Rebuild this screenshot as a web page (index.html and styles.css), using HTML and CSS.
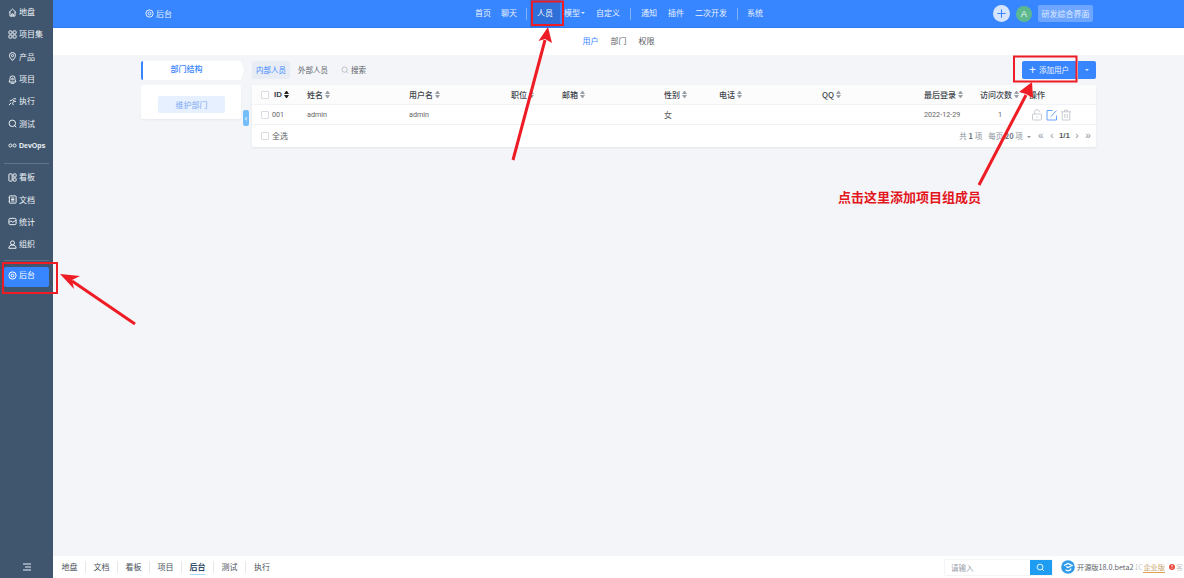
FILE: index.html
```html
<!DOCTYPE html>
<html lang="zh">
<head>
<meta charset="utf-8">
<title>后台 - 用户</title>
<link rel="stylesheet" href="styles.css">
</head>
<body>
<div class="app">
  <aside class="side">
    <nav class="side-list">
      <a class="side-item"><svg class="ico" viewBox="0 0 10 10"><path d="M1 5 5 1.200 9 5M2.200 4.200V9h5.600V4.200M4.200 9V6.500h1.600V9"/></svg>地盘</a>
      <a class="side-item"><svg class="ico" viewBox="0 0 10 10"><rect x="1" y="1" width="3.400" height="3.400" rx=".8"/><rect x="5.600" y="1" width="3.400" height="3.400" rx=".8"/><rect x="1" y="5.600" width="3.400" height="3.400" rx=".8"/><rect x="5.600" y="5.600" width="3.400" height="3.400" rx=".8"/></svg>项目集</a>
      <a class="side-item"><svg class="ico" viewBox="0 0 10 10"><path d="M5 9.500C3 7 1.600 5.600 1.600 4a3.400 3.400 0 0 1 6.800 0C8.400 5.600 7 7 5 9.500Z"/><circle cx="5" cy="4" r="1.200"/></svg>产品</a>
      <a class="side-item"><svg class="ico" viewBox="0 0 10 10"><path d="M5 1a2.800 2.800 0 0 0-2.800 2.800v1.500L1.200 7.800h7.600L7.800 5.300V3.800A2.800 2.800 0 0 0 5 1Z"/><circle cx="5" cy="4.500" r="1"/><path d="M3 9.200h4"/></svg>项目</a>
      <a class="side-item"><svg class="ico" viewBox="0 0 10 10"><path d="M1 9 3.500 6.500M2 4.500 5 3l2 1.500-2 2.500 1 2M6 2h3M7 4.500l2 .5"/></svg>执行</a>
      <a class="side-item"><svg class="ico" viewBox="0 0 10 10"><circle cx="4.800" cy="4.800" r="3.600"/><path d="m7 7 2.200 2.200"/></svg>测试</a>
      <a class="side-item side-strong"><svg class="ico" viewBox="0 0 10 10"><circle cx="2.700" cy="5" r="1.700"/><circle cx="7.300" cy="5" r="1.700"/></svg>DevOps</a>
      <span class="side-rule side-rule-a"></span>
      <a class="side-item"><svg class="ico" viewBox="0 0 10 10"><rect x="1" y="1" width="3.600" height="8" rx=".6"/><rect x="5.800" y="1" width="3.200" height="3.400" rx=".6"/><rect x="5.800" y="5.600" width="3.200" height="3.400" rx=".6"/></svg>看板</a>
      <a class="side-item"><svg class="ico" viewBox="0 0 10 10"><rect x="1.500" y="1" width="7.500" height="8" rx=".6"/><path d="M3.500 3.400h3.500M3.500 5h3.500M3.500 6.600h3.500M.8 3h1.400M.8 7h1.400"/></svg>文档</a>
      <a class="side-item"><svg class="ico" viewBox="0 0 10 10"><rect x="1" y="1.500" width="8" height="7" rx="1.500"/><path d="M1.200 6 3.200 4.300 5.200 5.800 8.800 3.800"/></svg>统计</a>
      <a class="side-item"><svg class="ico" viewBox="0 0 10 10"><circle cx="5" cy="3.200" r="2.200"/><path d="M1 9.200c0-2.500 1.500-3.600 4-3.600s4 1.100 4 3.600Z"/></svg>组织</a>
      <span class="side-rule side-rule-b"></span>
      <a class="side-item side-active"><svg class="ico" viewBox="0 0 10 10"><circle cx="5" cy="5" r="4"/><circle cx="5" cy="5" r="1.600"/></svg>后台</a>
    </nav>
    <button class="side-menu" aria-label="菜单"><svg class="menu-ico" viewBox="0 0 10 8"><path d="M1 1h8M3 4h6M1 7h8"/></svg></button>
  </aside>

  <div class="body">
    <header class="topbar">
      <div class="crumb"><svg class="ico" viewBox="0 0 10 10"><circle cx="5" cy="5" r="4"/><circle cx="5" cy="5" r="1.600"/></svg>后台</div>
      <nav class="topnav">
        <a class="nav-a w-a">首页</a>
        <a class="nav-a w-b">聊天</a>
        <i class="nav-sep sep-a"></i>
        <a class="nav-a nav-on">人员</a>
        <a class="nav-a nav-model">模型<b class="caret-w"></b></a>
        <a class="nav-a nav-cust">自定义</a>
        <i class="nav-sep sep-b"></i>
        <a class="nav-a">通知</a>
        <a class="nav-a nav-gap">插件</a>
        <a class="nav-a nav-gap">二次开发</a>
        <i class="nav-sep sep-c"></i>
        <a class="nav-a">系统</a>
      </nav>
      <div class="top-right">
        <span class="plus-round"><svg viewBox="0 0 12 12"><path d="M6 1.500v9M1.500 6h9"/></svg></span>
        <span class="avatar">A</span>
        <span class="theme-btn">研发综合界面</span>
      </div>
    </header>

    <div class="subnav">
      <a class="sub-on">用户</a>
      <a>部门</a>
      <a>权限</a>
    </div>

    <main class="content">
      <section class="tree">
        <div class="tree-head">部门结构</div>
        <div class="tree-card"><span class="tree-btn">维护部门</span></div>
        <span class="tree-toggle">‹</span>
      </section>

      <section class="list">
        <div class="toolbar">
          <a class="tab tab-on">内部人员</a>
          <a class="tab">外部人员</a>
          <a class="tab tab-search"><svg class="search-ico" viewBox="0 0 10 10"><circle cx="4.500" cy="4.500" r="3.300"/><path d="m7 7 2 2"/></svg>搜索</a>
          <span class="tool-end">
            <span class="add-btn"><span class="add-plus">+</span>添加用户</span>
            <span class="add-more"><b class="caret-w"></b></span>
          </span>
        </div>

        <div class="table">
          <div class="row row-head">
            <span class="cell"><i class="check"></i></span>
            <span class="cell cell-id">ID<i class="sort sort-on"></i></span>
            <span class="cell">姓名<i class="sort"></i></span>
            <span class="cell">用户名<i class="sort"></i></span>
            <span class="cell">职位<i class="sort"></i></span>
            <span class="cell">邮箱<i class="sort"></i></span>
            <span class="cell">性别<i class="sort"></i></span>
            <span class="cell">电话<i class="sort"></i></span>
            <span class="cell">QQ<i class="sort"></i></span>
            <span class="cell">最后登录<i class="sort"></i></span>
            <span class="cell">访问次数<i class="sort"></i></span>
            <span class="cell">操作</span>
          </div>
          <div class="row row-data">
            <span class="cell"><i class="check"></i></span>
            <span class="cell cell-code">001</span>
            <span class="cell">admin</span>
            <span class="cell">admin</span>
            <span class="cell"></span>
            <span class="cell"></span>
            <span class="cell cell-cjk">女</span>
            <span class="cell"></span>
            <span class="cell"></span>
            <span class="cell">2022-12-29</span>
            <span class="cell cell-num">1</span>
            <span class="cell cell-ops">
              <svg class="op" viewBox="0 0 12 12"><rect x="1.500" y="5" width="9" height="6" rx=".8"/><path d="M3.500 5V3.200a2.500 2.500 0 0 1 5 0M6 7.500v1.200"/></svg>
              <svg class="op op-edit" viewBox="0 0 12 12"><path d="M10.500 6.500V11h-9.500V1.500h5.500M5 7.500 10.500 1.500"/></svg>
              <svg class="op" viewBox="0 0 12 12"><path d="M1 2.800h10M4.500 2.800V1.200h3v1.600M2.200 2.800V11h7.600V2.800M4.800 5v4M7.200 5v4"/></svg>
            </span>
          </div>
          <div class="row-foot">
            <span class="all"><i class="check"></i>全选</span>
            <span class="pager">
              <span class="total">共 <b>1</b> 项</span>
              <span class="per">每页 <b>20</b> 项<i class="caret-g"></i></span>
              <span class="pg pg-first">«</span>
              <span class="pg">‹</span>
              <b class="pg-num">1/1</b>
              <span class="pg">›</span>
              <span class="pg">»</span>
            </span>
          </div>
        </div>
      </section>
    </main>

    <footer class="footbar">
      <nav class="foot-tabs">
        <a>地盘</a><a>文档</a><a>看板</a><a>项目</a><a class="foot-on">后台</a><a>测试</a><a>执行</a>
      </nav>
      <div class="foot-right">
        <span class="foot-search"><span class="foot-input">请输入</span><span class="foot-go"><svg viewBox="0 0 10 10"><circle cx="4.500" cy="4.500" r="3.200"/><path d="m7 7 2 2"/></svg></span></span>
        <span class="logo"><svg viewBox="0 0 14 14"><circle class="logo-bg" cx="7" cy="7" r="6.800"/><path class="logo-l" d="M3 5.500 7 3.500l4 2-4 2-2-1M10 8.500a3.200 3.200 0 0 1-5.500 1.200"/></svg></span>
        <span class="ver">开源版18.0.beta2</span>
        <span class="wm wm-a">1C</span>
        <span class="ent">企业版</span>
        <span class="ent-dot">?</span>
        <span class="wm wm-b">客</span>
      </div>
    </footer>
  </div>
</div>

<svg class="marks" viewBox="0 0 1184 578" aria-hidden="true">
  <rect class="mark-box" x="3" y="263" width="54" height="30"/>
  <rect class="mark-box" x="532" y="1.500" width="31" height="23.500"/>
  <rect class="mark-box" x="1014" y="56.500" width="62.500" height="25"/>
  <path class="mark-line" d="M135 324 72 281"/>
  <path class="mark-head" d="M60 274 80 276 72 280 74 289Z"/>
  <path class="mark-line" d="M513 160 545 40"/>
  <path class="mark-head" d="M548 27 552 43 545 39 538.500 41Z"/>
  <path class="mark-line" d="M979 185 1026 95"/>
  <path class="mark-head" d="M1032 82 1033 98 1026 94 1019 92Z"/>
</svg>
<div class="mark-text">点击这里添加项目组成员</div>
</body>
</html>
```
FILE: styles.css
```css
* { box-sizing: border-box; }
html, body { margin: 0; height: 100%; }
body {
  font-family: "Noto Sans CJK SC", "Liberation Sans", sans-serif;
  font-size: 8px;
  line-height: 12px;
  color: #4a5058;
  overflow: hidden;
  position: relative;
}
a { color: inherit; text-decoration: none; }
i { font-style: normal; }
svg { display: block; }

.app { display: flex; width: 1184px; height: 578px; }

/* sidebar */
.side {
  width: 53px;
  flex: none;
  background: #3f566e;
  display: flex;
  flex-direction: column;
  justify-content: space-between;
}
.side-list { display: flex; flex-direction: column; padding-top: 1px; }
.side-item {
  height: 22.300px;
  display: flex;
  align-items: center;
  gap: 2px;
  padding-left: 8px;
  color: #eef2f6;
  white-space: nowrap;
}
.side-strong { font-family: "Liberation Sans Narrow", "Liberation Sans", sans-serif; font-weight: 700; font-size: 7px; }
.side-rule { height: 1px; margin: 0 4px; background: #5f7488; }
.side-rule-a { margin-top: 6px; margin-bottom: 2px; }
.side-rule-b { margin-top: 4.700px; margin-bottom: 6px; }
.side-active {
  height: 20px;
  margin: 0 4px;
  padding: 0 0 3px 4px;
  background: #3785ff;
  border-radius: 2px;
  color: #fff;
}
.ico { width: 9px; height: 9px; flex: none; fill: none; stroke: currentColor; stroke-width: 1.100; }
.side-menu {
  height: 22px;
  background: none;
  border: 0;
  padding: 0;
  display: flex;
  align-items: center;
  justify-content: center;
}
.menu-ico { width: 10px; height: 8px; fill: none; stroke: #e8edf2; stroke-width: 1; }

/* main column */
.body { flex: 1; min-width: 0; display: flex; flex-direction: column; background: #f3f5f8; }

.topbar {
  height: 28px;
  flex: none;
  background: #3785ff;
  color: #e9f1ff;
  display: grid;
  grid-template-columns: 422px auto 1fr;
  align-items: center;
  border-bottom: 1px solid #2f7cf2;
}
.crumb { display: flex; align-items: center; gap: 2px; padding-left: 92px; }
.topnav { display: flex; align-items: stretch; height: 27px; }
.nav-a { display: flex; align-items: center; white-space: nowrap; padding-bottom: 1px; }
.w-a { margin-right: 10px; }
.nav-sep { align-self: center; width: 1px; height: 12px; background: #82b2fb; }
.sep-a { margin: 0 3px 0 9px; }
.sep-b { margin: 0 10px; }
.sep-c { margin: 0 9.500px; }
.nav-on { width: 30px; justify-content: center; background: #2e6fd8; color: #fff; }
.nav-model { margin-left: 4px; gap: 1px; }
.nav-cust { margin-left: 11px; }
.nav-gap { margin-left: 11px; }
.caret-w {
  display: inline-block;
  border: 2px solid transparent;
  border-top-color: #dce9ff;
  border-bottom-width: 0;
}
.top-right { display: flex; align-items: center; justify-content: flex-end; padding-right: 91px; }
.plus-round {
  width: 17px;
  height: 17px;
  border-radius: 50%;
  background: #d6e5ff;
  display: flex;
  align-items: center;
  justify-content: center;
}
.plus-round svg { width: 11px; height: 11px; fill: none; stroke: #3785ff; stroke-width: 1.200; }
.avatar {
  width: 16px;
  height: 16px;
  margin-left: 6px;
  border-radius: 50%;
  background: #5cb88e;
  color: #e8f5ef;
  font-family: "Liberation Sans", sans-serif;
  font-size: 9.500px;
  display: flex;
  align-items: center;
  justify-content: center;
}
.theme-btn {
  width: 55px;
  height: 17px;
  margin-left: 6px;
  border-radius: 2px;
  background: #6ea6ff;
  color: #dfeaff;
  display: flex;
  align-items: center;
  justify-content: center;
  white-space: nowrap;
}

.subnav {
  height: 27px;
  flex: none;
  background: #fff;
  display: flex;
  align-items: center;
  justify-content: center;
  gap: 12px;
  padding-bottom: 1px;
  color: #5b6168;
}
.sub-on { color: #3785ff; }

/* content */
.content {
  flex: 1;
  min-height: 0;
  padding: 6px 88px 0;
  display: flex;
  gap: 8px;
  align-items: flex-start;
}
.tree { width: 103px; flex: none; position: relative; }
.tree-head {
  height: 19px;
  background: #fff;
  border-left: 2px solid #3785ff;
  border-radius: 2px 0 0 2px;
  clip-path: polygon(0 0, 97% 0, 100% 50%, 97% 100%, 0 100%);
  color: #3785ff;
  font-weight: 500;
  display: flex;
  align-items: center;
  justify-content: center;
  padding: 0 14px 3px 0;
}
.tree-card {
  width: 100px;
  height: 34px;
  margin-top: 5px;
  padding: 11px 0 0 17px;
  background: #fff;
  border-radius: 2px;
  box-shadow: 0 1px 2px rgba(40, 60, 90, .06);
}
.tree-btn {
  width: 67px;
  height: 17px;
  background: #e6f0ff;
  border-radius: 2px;
  color: #7fa9f3;
  display: flex;
  align-items: center;
  justify-content: center;
}
.tree-toggle {
  position: absolute;
  left: 102px;
  top: 49px;
  width: 6px;
  height: 16px;
  background: #74bdfb;
  border-radius: 2px;
  color: #fff;
  font-size: 8px;
  font-weight: 700;
  line-height: 15px;
  text-align: center;
}

.list { flex: 1; min-width: 0; }
.toolbar { height: 19px; display: flex; align-items: flex-start; gap: 4px; margin-bottom: 5px; color: #5b6168; font-size: 7.500px; }
.tab { height: 18px; display: flex; align-items: center; padding: 0 4px 1px; border-radius: 2px; }
.tab-on { background: #e8edf5; color: #3785ff; }
.tab-search { gap: 2px; margin-left: 1px; }
.search-ico { width: 8px; height: 8px; fill: none; stroke: #a2a8b0; stroke-width: .8; }
.tool-end { margin-left: auto; display: flex; gap: 2px; color: #eef4ff; }
.add-btn {
  width: 54px;
  height: 18px;
  background: #3785ff;
  border-radius: 2px 0 0 2px;
  display: flex;
  align-items: center;
  justify-content: center;
  gap: 3px;
  white-space: nowrap;
}
.add-plus { font-family: "Liberation Sans", sans-serif; font-size: 12px; line-height: 12px; }
.add-more {
  width: 18px;
  height: 18px;
  background: #3785ff;
  border-radius: 0 2px 2px 0;
  display: flex;
  align-items: center;
  justify-content: center;
}

.table { background: #fff; border-radius: 2px; box-shadow: 0 1px 2px rgba(40, 60, 90, .08); }
.row {
  height: 20px;
  display: grid;
  grid-template-columns: 22px 33px 102px 102px 51px 102px 55px 103px 102px 56px 49px 1fr;
  align-items: center;
  border-bottom: 1px solid #f1f3f6;
}
.row-head { background: #fcfcfd; font-weight: 500; color: #3f454c; }
.cell { display: flex; align-items: center; gap: 2px; white-space: nowrap; }
.cell-id { font-family: "Liberation Sans", sans-serif; font-weight: 700; }
.row-data { color: #666; font-family: Roboto, "Liberation Sans", sans-serif; font-size: 7.200px; }
.cell-code { margin-left: -2px; }
.cell-cjk { font-family: "Noto Sans CJK SC", sans-serif; font-size: 8px; }
.cell-num { padding-left: 18px; }
.cell-ops { gap: 2.500px; margin-left: 2px; }
.check {
  display: block;
  width: 8px;
  height: 8px;
  margin-left: 9px;
  flex: none;
  border: 1px solid #d9dde3;
  border-radius: 1px;
  background: #fff;
}
.sort {
  width: 5px;
  flex: none;
  display: flex;
  flex-direction: column;
  gap: 1px;
  color: #9aa1a9;
}
.sort::before, .sort::after {
  content: "";
  display: block;
  border-left: 2.500px solid transparent;
  border-right: 2.500px solid transparent;
}
.sort::before { border-bottom: 3px solid currentColor; }
.sort::after { border-top: 3px solid currentColor; }
.sort-on { color: #222; }
.op { width: 12px; height: 12px; flex: none; fill: none; stroke: #c2c6cc; stroke-width: .9; }
.op-edit { stroke: #68a4fb; stroke-width: 1; }
.row-foot { height: 22px; display: flex; align-items: center; justify-content: space-between; padding-right: 5px; color: #5b6168; }
.all { display: flex; align-items: center; gap: 3px; }
.pager { display: flex; align-items: center; color: #8b9199; gap: 5px; font-size: 7.500px; }
.pager b { font-weight: 700; color: #6f757c; }
.total { margin-right: 1px; }
.per { display: block; white-space: nowrap; }
.caret-g { display: inline-block; vertical-align: middle; margin-left: 4px; border: 2px solid transparent; border-top-color: #8b9199; border-bottom-width: 0; }
.pg { font-family: "Liberation Sans", sans-serif; font-size: 10px; width: 6px; text-align: center; }
.pg-first { margin-left: 2px; }
.pager .pg-num { font-family: "Liberation Sans", sans-serif; font-size: 8px; color: #5b6168; margin: 0 -1px; }

/* footer */
.footbar {
  height: 22px;
  flex: none;
  background: #fff;
  display: flex;
  align-items: center;
  justify-content: space-between;
  padding: 0 0 0 1px;
}
.foot-tabs { display: flex; color: #4a5058; }
.foot-tabs a {
  width: 32px;
  height: 12px;
  text-align: center;
  position: relative;
  border-right: 1px solid #e5e7ea;
  line-height: 12px;
}
.foot-tabs a:last-child { border-right: 0; }
.foot-tabs .foot-on { color: #2f4a66; font-weight: 700; }
.foot-on::after {
  content: "";
  position: absolute;
  left: 8px;
  right: 8px;
  bottom: -2px;
  height: 1.500px;
  background: #a7d8f5;
}
.foot-right { display: flex; align-items: center; }
.foot-search { display: flex; width: 107px; height: 15px; box-shadow: 0 0 1px rgba(0, 0, 0, .25); }
.foot-input { flex: 1; padding-left: 6px; color: #9aa0a8; line-height: 15px; background: #fff; font-size: 7.500px; }
.foot-go { width: 22px; background: #1e9df2; display: flex; align-items: center; justify-content: center; }
.foot-go svg { width: 9px; height: 9px; fill: none; stroke: #fff; stroke-width: 1; }
.logo { width: 14px; height: 14px; margin-left: 9px; }
.logo-bg { fill: #2f9ae8; }
.logo-l { fill: none; stroke: #fff; stroke-width: 1.300; }
.ver { margin-left: 2px; color: #5b6168; white-space: nowrap; font-size: 7.200px; }
.wm { color: #c9ccd0; font-size: 7px; white-space: nowrap; }
.wm-a { margin-left: 1px; width: 8px; }
.wm-b { margin-left: 1px; width: 8px; }
.ent { margin-left: 1px; color: #c9a169; border-bottom: 1px solid #e0a050; line-height: 10px; font-size: 7.200px; white-space: nowrap; }
.ent-dot {
  width: 6px;
  height: 6px;
  margin-left: 4px;
  border-radius: 50%;
  background: #e8483f;
  color: #fff;
  font-size: 5px;
  line-height: 6px;
  text-align: center;
}

/* annotations drawn over the screenshot */
.marks { position: absolute; left: 0; top: 0; width: 1184px; height: 578px; pointer-events: none; }
.mark-box { fill: none; stroke: #ee1c25; stroke-width: 2; }
.mark-line { fill: none; stroke: #ee1c25; stroke-width: 3; }
.mark-head { fill: #ee1c25; }
.mark-text {
  position: absolute;
  left: 838px;
  top: 188px;
  color: #e3161d;
  font-size: 13px;
  line-height: 18px;
  font-weight: 700;
  white-space: nowrap;
}
```
